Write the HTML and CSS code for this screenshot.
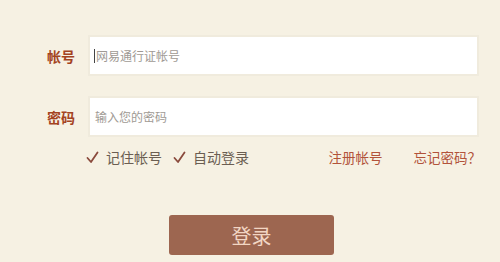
FILE: index.html
```html
<!DOCTYPE html>
<html lang="zh">
<head>
<meta charset="utf-8">
<link rel="stylesheet" href="styles.css">
</head>
<body>
<div class="form">
  <div class="field">
    <span class="label">帐号</span>
    <div class="input"><span class="caret"></span><span class="ph">网易通行证帐号</span></div>
  </div>
  <div class="field second">
    <span class="label">密码</span>
    <div class="input"><span class="ph">输入您的密码</span></div>
  </div>
  <div class="opts">
    <span class="chk"><svg width="13" height="13" viewBox="0 0 13 13"><path d="M1.5 7 L5 11 L11.5 1.5" fill="none" stroke="#8a4a3c" stroke-width="1.8" stroke-linecap="round" stroke-linejoin="round"/></svg>记住帐号</span>
    <span class="chk"><svg width="13" height="13" viewBox="0 0 13 13"><path d="M1.5 7 L5 11 L11.5 1.5" fill="none" stroke="#8a4a3c" stroke-width="1.8" stroke-linecap="round" stroke-linejoin="round"/></svg>自动登录</span>
    <div class="links">
      <a class="link">注册帐号</a>
      <a class="link">忘记密码？</a>
    </div>
  </div>
  <div class="btnrow">
    <button class="btn">登录</button>
  </div>
</div>
</body>
</html>
```

FILE: styles.css
```css
html, body {
  margin: 0;
  padding: 0;
}
body {
  width: 500px;
  height: 262px;
  background: #f6f1e3;
  font-family: "Noto Sans CJK SC", "Noto Sans", sans-serif;
  overflow: hidden;
}
.form {
  padding: 35px 21px 0 47px;
}
.field {
  display: flex;
  align-items: center;
  gap: 13px;
}
.field.second {
  margin-top: 20px;
}
.label {
  width: 28px;
  font-size: 14px;
  font-weight: bold;
  color: #a4431f;
  line-height: 1;
}
.input {
  box-sizing: border-box;
  width: 391px;
  height: 41px;
  background: #fff;
  border: 2px solid #f0ebdd;
  display: flex;
  align-items: center;
  padding-left: 4px;
}
.caret {
  width: 1px;
  height: 14px;
  background: #444;
}
.ph {
  font-size: 12px;
  color: #a09a94;
  padding-left: 1px;
}
.opts {
  display: flex;
  align-items: center;
  height: 20px;
  margin-top: 10px;
  padding-left: 39px;
}
.chk {
  display: flex;
  align-items: center;
  gap: 7px;
  font-size: 14px;
  color: #6b5e52;
  margin-right: 11px;
}
.links {
  margin-left: auto;
  margin-right: -2px;
  display: flex;
  gap: 31px;
}
.link {
  font-size: 13.5px;
  color: #b2533a;
}
.btnrow {
  margin-top: 48px;
  padding-left: 122px;
}
.btn {
  width: 165px;
  height: 40px;
  border: none;
  border-radius: 3px;
  background: #9d6650;
  color: #f2d6c4;
  font-family: "Noto Sans CJK SC", sans-serif;
  font-size: 20px;
  padding: 0;
}
```
